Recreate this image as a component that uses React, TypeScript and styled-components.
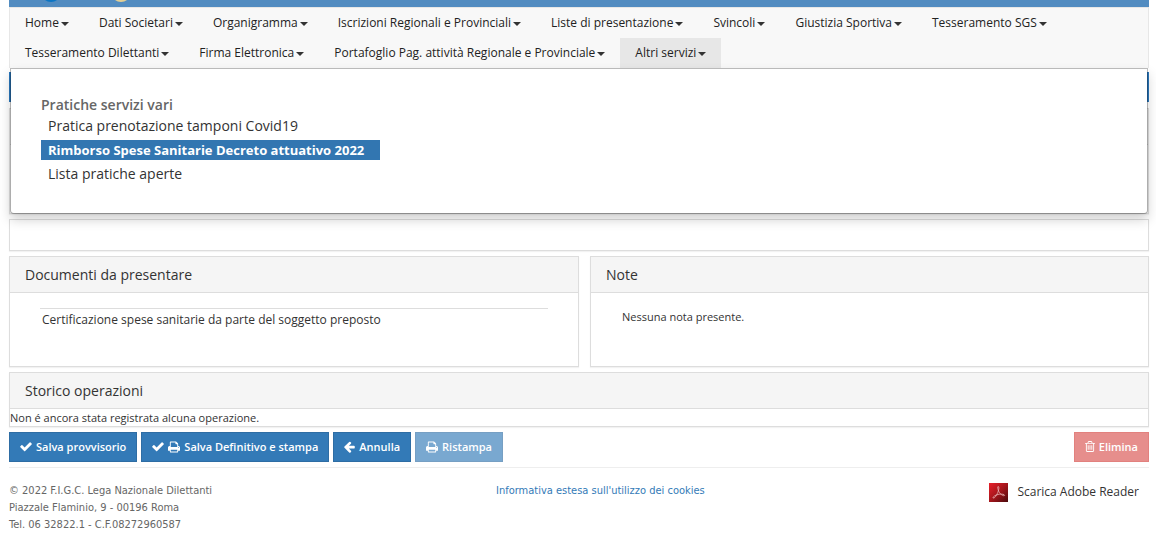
import React from "react";
import styled, { createGlobalStyle, css } from "styled-components";

const GlobalStyle = createGlobalStyle`
  *, *::before, *::after { box-sizing: border-box; }
  body {
    margin: 0;
    background: #fff;
    color: #333;
    font-family: "Open Sans", "Noto Sans", sans-serif;
    font-size: 12px;
    line-height: 18px;
  }
  a { color: inherit; text-decoration: none; }
`;

const Page = styled.div`
  padding: 0 7px 0 9px;
`;

const Banner = styled.header`
  display: flex;
  align-items: flex-end;
  gap: 50px;
  height: 7px;
  padding-left: 32px;
  overflow: hidden;
  background: #528cc1;
`;

const BannerLogo = styled.svg`
  display: block;
  width: 20px;
  height: 20px;
  flex: none;
  margin-bottom: 5px;
`;

const Navbar = styled.nav`
  position: relative;
  z-index: 2;
  background: #f8f8f8;
  border: 1px solid #e7e7e7;
  border-bottom: 0;
`;

const NavList = styled.ul`
  display: flex;
  flex-wrap: wrap;
  margin: 0;
  padding: 0;
  list-style: none;
`;

const NavLink = styled.a<{ $open?: boolean }>`
  display: flex;
  align-items: center;
  gap: 2px;
  height: 30px;
  padding: 0 15px;
  color: #222;
  background: ${(p) => (p.$open ? "#e7e7e7" : "transparent")};

  &::after {
    content: "";
    border-top: 4px solid #333;
    border-left: 4px solid transparent;
    border-right: 4px solid transparent;
    margin-top: 2px;
  }
`;

const MegaMenu = styled.section`
  position: absolute;
  top: 100%;
  left: 0;
  right: 0;
  height: 146px;
  padding: 25px 30px;
  background: #fff;
  background-clip: padding-box;
  border: 1px solid rgba(0, 0, 0, 0.25);
  border-radius: 0 0 4px 4px;
  box-shadow: 0 6px 12px rgba(0, 0, 0, 0.175);
`;

const MenuTitle = styled.h2`
  margin: 0;
  color: #666;
  font-size: 14px;
  font-weight: 600;
  line-height: 22px;
`;

const MenuItems = styled.ul`
  display: flex;
  flex-direction: column;
  align-items: flex-start;
  gap: 4px;
  margin: 0;
  padding: 0;
  list-style: none;
`;

const MenuLink = styled.a<{ $current?: boolean }>`
  display: block;
  padding: 0 12px 0 7px;
  font-size: 14px;
  line-height: 20px;
  ${(p) =>
    p.$current &&
    css`
      padding-right: 16px;
      color: #fff;
      background: #3276b1;
      font-size: 13px;
      font-weight: 700;
    `}
`;

const Main = styled.main`
  display: flex;
  flex-direction: column;
  gap: 5px;
  padding-top: 4px;
`;

const TitleBar = styled.div`
  height: 30px;
  margin-bottom: 1px;
  background: #2a76ba;
`;

const Panel = styled.section`
  background: #fff;
  border: 1px solid #ddd;
  box-shadow: 0 1px 1px rgba(0, 0, 0, 0.05);
`;

const PanelHeading = styled.h3`
  min-height: 36px;
  margin: 0;
  padding: 8px 15px 7px;
  background: #f5f5f5;
  border-bottom: 1px solid #ddd;
  font-size: 14px;
  font-weight: 400;
  line-height: 20px;
`;

const PanelSpace = styled.div<{ $height: number }>`
  height: ${(p) => p.$height}px;
`;

const Columns = styled.div`
  display: grid;
  grid-template-columns: 570fr 559fr;
  align-items: start;
  gap: 11px;
`;

const PanelBody = styled.div`
  min-height: 73px;
  padding: 15px 30px;
`;

const DocumentsTable = styled.table`
  width: 100%;
  border-collapse: collapse;

  td {
    padding: 2px;
    border-top: 1px solid #ddd;
  }
`;

const Note = styled.p`
  margin: 0;
  padding: 0 1px;
  font-size: 11px;
`;

const Operations = styled.p`
  margin: 0;
  font-size: 11px;
  line-height: 17px;
`;

const Actions = styled.div`
  display: flex;
  gap: 4px;
`;

const ActionButton = styled.button<{ $tone?: "danger" }>`
  display: flex;
  align-items: center;
  gap: 4px;
  height: 30px;
  padding: 0 10px;
  color: #fff;
  background: ${(p) => (p.$tone ? "#d9534f" : "#337ab7")};
  border: 1px solid ${(p) => (p.$tone ? "#d43f3a" : "#2e6da4")};
  font-family: "Open Sans", "Noto Sans", sans-serif;
  font-size: 11px;
  font-weight: 600;
  line-height: 18px;
  margin-left: ${(p) => (p.$tone ? "auto" : "0")};
  white-space: nowrap;

  &:disabled { opacity: 0.65; }
`;

const Glyph = styled.svg<{ $width: number }>`
  width: ${(p) => p.$width}px;
  height: 12px;
  flex: none;
  fill: currentColor;
`;

const Footer = styled.footer`
  display: grid;
  grid-template-columns: 487fr 326fr 327fr;
  align-items: start;
  margin-top: 5px;
  padding-top: 14px;
  border-top: 1px solid #eee;
  color: #666;
  font-family: "DejaVu Sans Condensed", "DejaVu Sans", sans-serif;
  font-size: 11px;
  line-height: 17px;
`;

const Address = styled.address`
  font-style: normal;
`;

const CookieLink = styled.a`
  color: #337ab7;
`;

const ReaderLink = styled.a`
  display: flex;
  align-items: center;
  justify-self: end;
  gap: 9px;
  padding-right: 10px;
  color: #333;
  font-family: "Open Sans", "Noto Sans", sans-serif;
  font-size: 12px;
  line-height: 20px;
`;

const ReaderIcon = styled.svg`
  width: 19px;
  height: 19px;
`;

const glyphs = {
  check: {
    width: 12,
    box: "100 160 1592 1592",
    path: "M1671 566q0 40-28 68l-724 724-136 136q-28 28-68 28t-68-28l-136-136-362-362q-28-28-28-68t28-68l136-136q28-28 68-28t68 28l294 295 656-657q28-28 68-28t68 28l136 136q28 28 28 68z",
  },
  print: {
    width: 12,
    box: "64 64 1664 1664",
    path: "M448 1536h896v-256h-896v256zm0-640h896v-384h-160q-40 0-68-28t-28-68v-160h-640v640zm1152 64q0-26-19-45t-45-19-45 19-19 45 19 45 45 19 45-19 19-45zm128 0v416q0 13-9.5 22.5t-22.5 9.5h-224v160q0 40-28 68t-68 28h-960q-40 0-68-28t-28-68v-160h-224q-13 0-22.5-9.5t-9.5-22.5v-416q0-79 56.5-135.5t135.5-56.5h64v-544q0-40 28-68t68-28h672q40 0 88 20t76 48l152 152q28 28 48 76t20 88v256h64q79 0 135.5 56.5t56.5 135.5z",
  },
  back: {
    width: 11,
    box: "160 160 1536 1536",
    path: "M1664 896v128q0 53-32.5 90.5t-84.5 37.5h-704l293 294q38 36 38 90t-38 90l-75 76q-37 37-90 37-52 0-91-37l-651-652q-37-37-37-90 0-52 37-91l651-650q38-38 91-38 52 0 90 38l75 74q38 38 38 91t-38 91l-293 293h704q52 0 84.5 37.5t32.5 90.5z",
  },
  trash: {
    width: 10,
    box: "192 128 1408 1664",
    path: "M704 736v576q0 14-9 23t-23 9h-64q-14 0-23-9t-9-23v-576q0-14 9-23t23-9h64q14 0 23 9t9 23zm256 0v576q0 14-9 23t-23 9h-64q-14 0-23-9t-9-23v-576q0-14 9-23t23-9h64q14 0 23 9t9 23zm256 0v576q0 14-9 23t-23 9h-64q-14 0-23-9t-9-23v-576q0-14 9-23t23-9h64q14 0 23 9t9 23zm128 724v-948h-896v948q0 22 7 40.5t14.5 27 10.5 8.5h832q3 0 10.5-8.5t14.5-27 7-40.5zm-672-1076h448l-48-117q-7-9-17-11h-317q-10 2-17 11zm928 32v64q0 14-9 23t-23 9h-96v948q0 83-47 143.5t-113 60.5h-832q-66 0-113-58.5t-47-141.5v-952h-96q-14 0-23-9t-9-23v-64q0-14 9-23t23-9h309l70-167q15-37 54-63t79-26h320q40 0 79 26t54 63l70 167h309q14 0 23 9t9 23z",
  },
};

function Icon({ name }: { name: keyof typeof glyphs }) {
  const glyph = glyphs[name];
  return (
    <Glyph viewBox={glyph.box} $width={glyph.width} aria-hidden="true">
      <path d={glyph.path} />
    </Glyph>
  );
}

const navItems = [
  "Home",
  "Dati Societari",
  "Organigramma",
  "Iscrizioni Regionali e Provinciali",
  "Liste di presentazione",
  "Svincoli",
  "Giustizia Sportiva",
  "Tesseramento SGS",
  "Tesseramento Dilettanti",
  "Firma Elettronica",
  "Portafoglio Pag. attività Regionale e Provinciale",
  "Altri servizi",
];

const openItem = "Altri servizi";

const services = [
  "Pratica prenotazione tamponi Covid19",
  "Rimborso Spese Sanitarie Decreto attuativo 2022",
  "Lista pratiche aperte",
];

const currentService = services[1];

export default function App() {
  return (
    <>
      <GlobalStyle />
      <Page>
        <Banner>
          <BannerLogo viewBox="0 0 16 16" aria-hidden="true">
            <circle cx="8" cy="8" r="8" fill="#0b75c4" />
          </BannerLogo>
          <BannerLogo viewBox="0 0 16 16" aria-hidden="true">
            <circle cx="8" cy="8" r="7" fill="#2866a5" stroke="#e3cf94" strokeWidth="2" />
          </BannerLogo>
        </Banner>

        <Navbar>
          <NavList>
            {navItems.map((item) => (
              <li key={item}>
                <NavLink href="#" $open={item === openItem}>
                  {item}
                </NavLink>
              </li>
            ))}
          </NavList>
          <MegaMenu>
            <MenuTitle>Pratiche servizi vari</MenuTitle>
            <MenuItems>
              {services.map((service) => (
                <li key={service}>
                  <MenuLink href="#" $current={service === currentService}>
                    {service}
                  </MenuLink>
                </li>
              ))}
            </MenuItems>
          </MegaMenu>
        </Navbar>

        <Main>
          <TitleBar />
          <Panel>
            <PanelHeading />
            <PanelSpace $height={68} />
          </Panel>
          <Panel>
            <PanelSpace $height={30} />
          </Panel>
          <Columns>
            <Panel>
              <PanelHeading>Documenti da presentare</PanelHeading>
              <PanelBody>
                <DocumentsTable>
                  <tbody>
                    <tr>
                      <td>Certificazione spese sanitarie da parte del soggetto preposto</td>
                    </tr>
                  </tbody>
                </DocumentsTable>
              </PanelBody>
            </Panel>
            <Panel>
              <PanelHeading>Note</PanelHeading>
              <PanelBody>
                <Note>Nessuna nota presente.</Note>
              </PanelBody>
            </Panel>
          </Columns>
          <Panel>
            <PanelHeading>Storico operazioni</PanelHeading>
            <Operations>Non é ancora stata registrata alcuna operazione.</Operations>
          </Panel>
          <Actions>
            <ActionButton type="button">
              <Icon name="check" />
              Salva provvisorio
            </ActionButton>
            <ActionButton type="button">
              <Icon name="check" />
              <Icon name="print" />
              Salva Definitivo e stampa
            </ActionButton>
            <ActionButton type="button">
              <Icon name="back" />
              Annulla
            </ActionButton>
            <ActionButton type="button" disabled>
              <Icon name="print" />
              Ristampa
            </ActionButton>
            <ActionButton type="button" $tone="danger" disabled>
              <Icon name="trash" />
              Elimina
            </ActionButton>
          </Actions>
        </Main>

        <Footer>
          <Address>
            © 2022 F.I.G.C. Lega Nazionale Dilettanti
            <br />
            Piazzale Flaminio, 9 - 00196 Roma
            <br />
            Tel. 06 32822.1 - C.F.08272960587
          </Address>
          <CookieLink href="#">Informativa estesa sull'utilizzo dei cookies</CookieLink>
          <ReaderLink href="#">
            <ReaderIcon viewBox="0 0 19 19" aria-hidden="true">
              <defs>
                <linearGradient id="reader" x1="0" y1="0" x2="1" y2="1">
                  <stop offset="0" stopColor="#e8202a" />
                  <stop offset="0.5" stopColor="#a5161c" />
                  <stop offset="1" stopColor="#4a0a0c" />
                </linearGradient>
              </defs>
              <rect width="19" height="19" fill="url(#reader)" />
              <path
                d="M9 3.5C10.500 3.500 9.800 7 8.800 9.500C7.500 12.500 5.500 15.500 4.200 15C3.200 14 7 11.500 10.500 11.200C13.500 10.900 16 11.500 15.500 12.500C14.500 13.500 11 11 9.800 8.500C9 6.500 8.300 3.800 9 3.500Z"
                fill="none"
                stroke="#e9b5b5"
                strokeWidth="0.8"
              />
            </ReaderIcon>
            Scarica Adobe Reader
          </ReaderLink>
        </Footer>
      </Page>
    </>
  );
}
